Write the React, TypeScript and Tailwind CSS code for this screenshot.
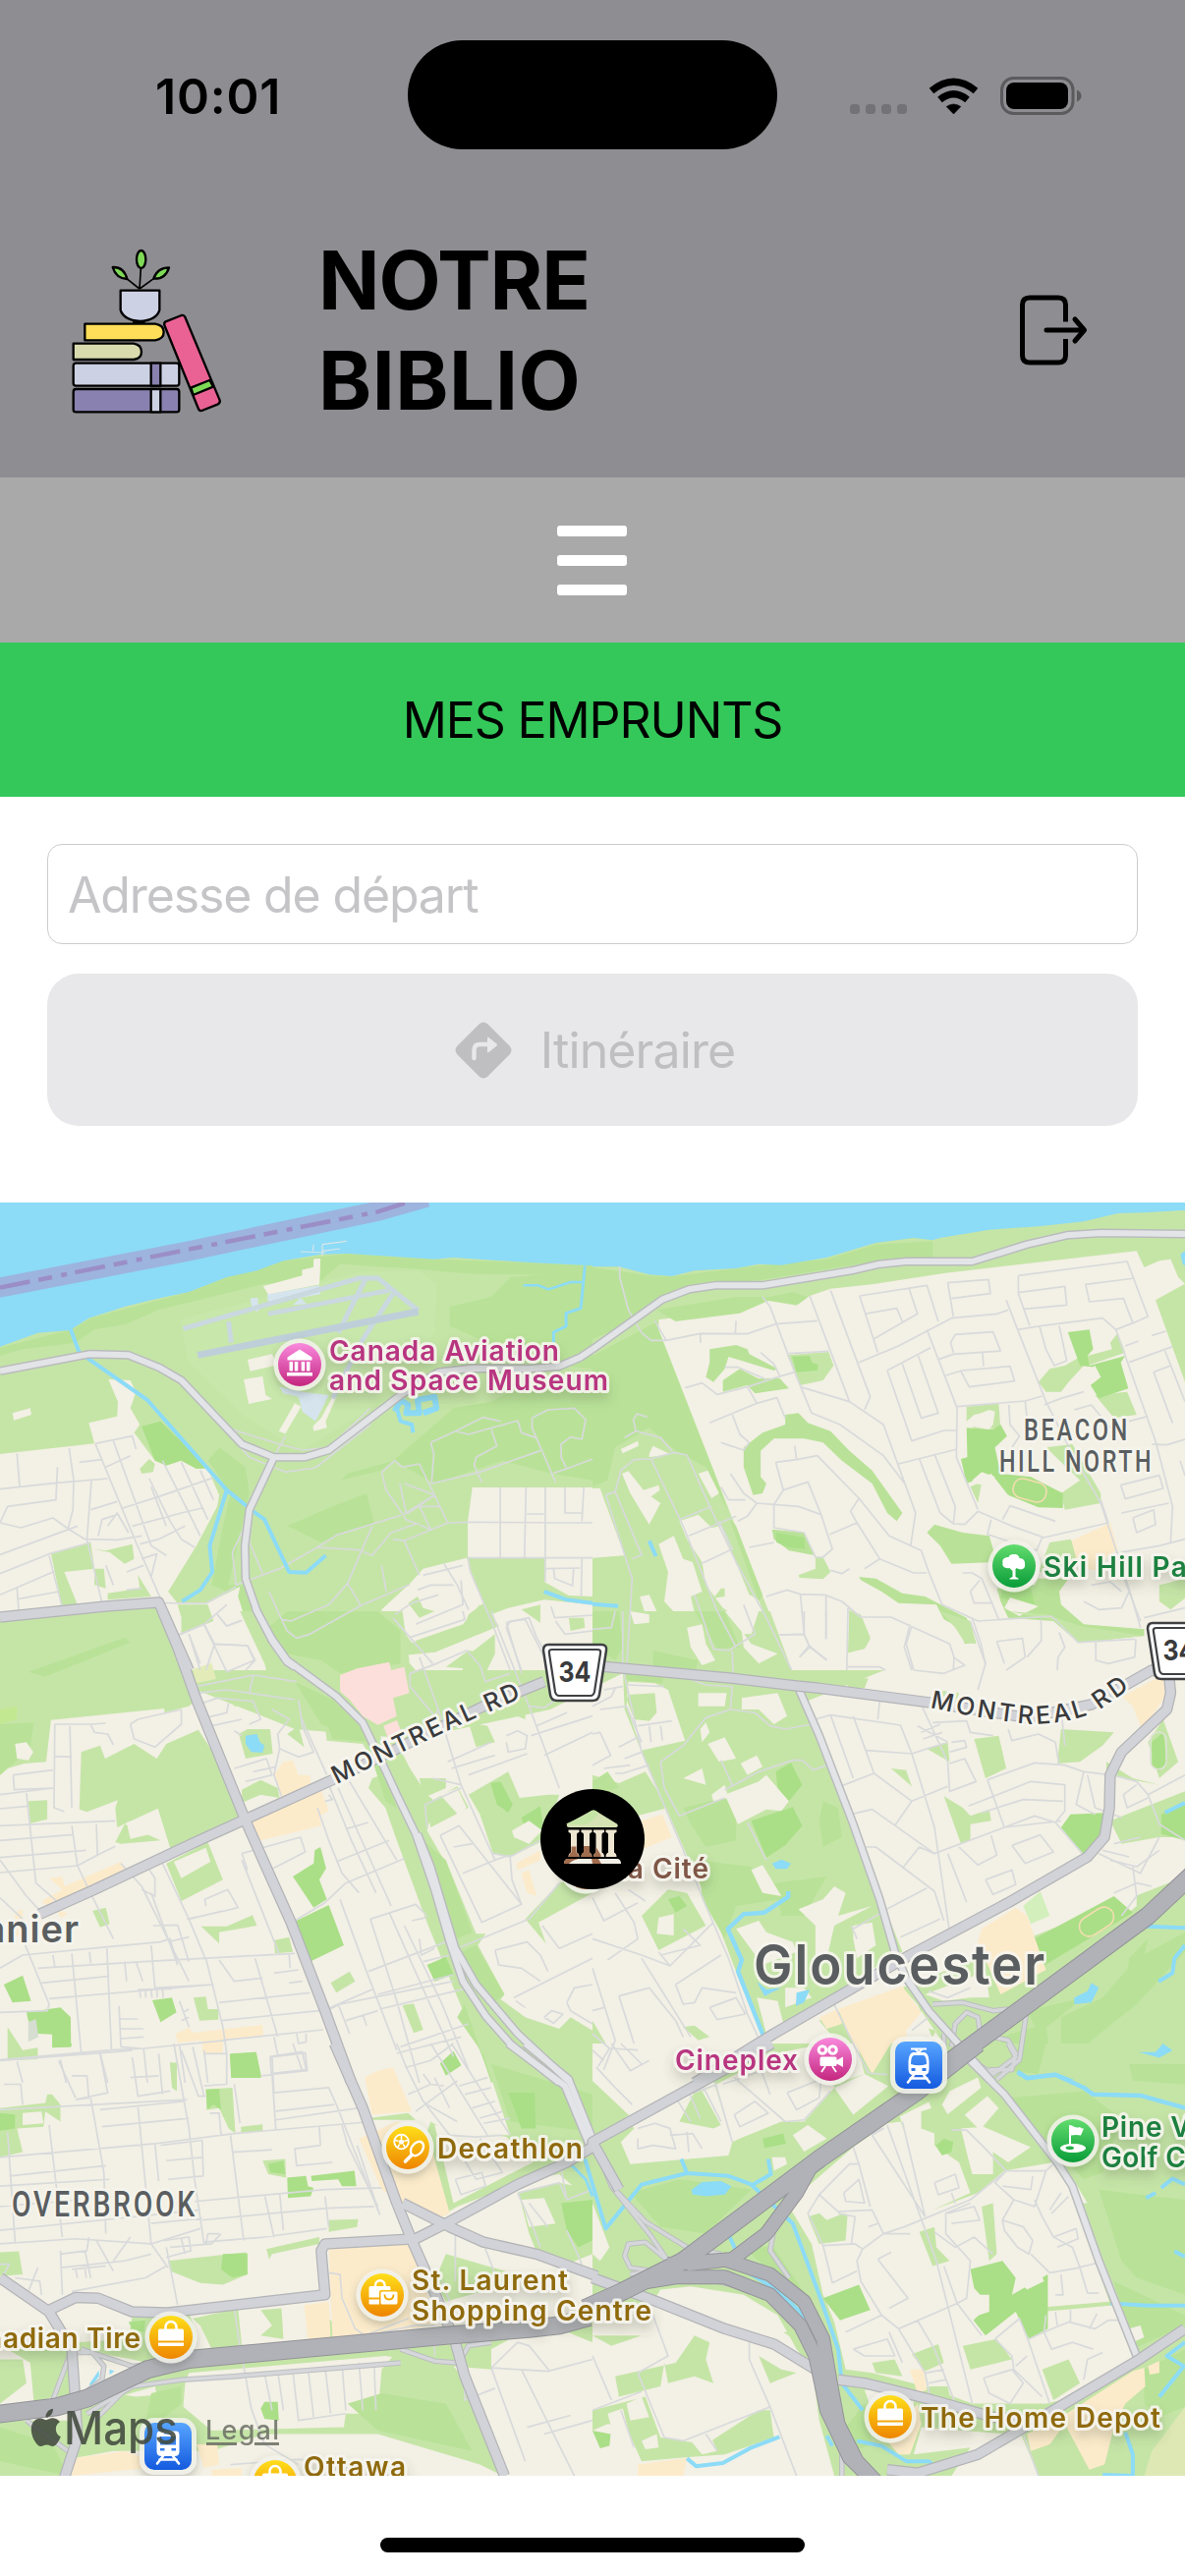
import React from 'react';

type TileId = 'A' | 'B' | 'C' | 'D' | 'E' | 'F' | 'M';

/* Map sheets: each one carries its own drawing grid and is placed on the map. */
const KX = 603 / 1568;
const SHEETS: Record<TileId, string> = {
  A: `translate(0 1220) scale(${KX} ${1 / 3})`,
  B: `translate(603 1220) scale(${KX} ${1 / 3})`,
  C: `translate(0 1640) scale(${KX} ${1 / 3})`,
  D: `translate(603 1640) scale(${KX} ${1 / 3})`,
  E: `translate(0 2080) scale(${KX} ${542 / 1568})`,
  F: `translate(603 2080) scale(${KX} ${542 / 1568})`,
  M: '',
};

const toPath = (s: string, close = false) =>
  s
    .split(';')
    .map((p) => p.trim())
    .filter(Boolean)
    .map((p) => 'M' + p.split(/\s+/).join('L') + (close ? 'Z' : ''))
    .join('');

const C = {
  land: '#F3F0E5',
  green: '#C5E5A7',
  deep: '#B9E298',
  park: '#AADF87',
  water: '#8CDBF7',
  street: '#D8DADB',
  shop: '#FCEBCB',
  pink: '#FCDFDA',
  apron: '#D6E4EE',
};

type Area = [TileId, string, string];

const AREAS: Area[] = [
  ['M', C.green, '0,1224 1206,1224 1206,1700 900,1700 800,1740 640,1700 560,1740 420,1770 300,1760 0,1640'],
  ['A', C.deep, '0,455 190,400 240,365 500,285 600,240 750,190 920,168 1150,185 1400,195 1568,205 1568,235 1250,230 1100,215 900,200 850,250 700,260 560,300 420,340 330,385 250,400 200,440 60,460 0,480'],
  ['A', C.deep, '1190,330 1300,300 1350,240 1568,220 1568,520 1400,500 1250,420 1190,390;580,760 650,820 660,900 600,1200 560,1180 590,1000 610,900 550,800;900,860 1010,830 1200,640 1300,620 1400,560 1568,540 1568,860 1460,840 1330,800 1150,870 1040,800 920,840;760,1000 880,940 970,900 990,990 850,1050;700,1380 900,1330 1010,1260 1060,1400 1020,1440 760,1440;30,1400 340,1335 345,1355 100,1440 0,1440 0,1420;580,1180 650,1180 690,1300 760,1440 710,1440 640,1260'],
  ['A', '#C8E7AB', '475,370 960,222 1110,222 1155,260 1150,410 980,640 800,770 640,660 500,500'],
  ['B', C.deep, '0,210 150,235 210,238 440,205 620,185 750,140 900,130 900,180 760,190 440,250 250,270 180,305 80,390 0,430;0,480 180,370 260,620 330,860 360,960 300,820 220,770 150,700 60,760 40,860 0,880;170,340 380,300 470,300 530,285 570,300 550,325 470,312 390,350 220,375'],
  ['A', C.land, '0,780 250,748 235,685 310,665 312,620 287,552 345,555 360,590 345,640 370,690 355,715 410,800 480,800 520,825 550,825 580,905 575,940 520,1060 445,1200 470,1236 430,1232 0,1275;33,655 80,640 83,660 37,677;697,268 800,235 800,218 830,210 830,185 848,183 845,262 710,292;655,492 720,475 735,508 662,527;645,552 695,543 703,600 720,612 658,627;738,710 780,625 797,635 755,718;828,695 850,670 885,595 890,605 862,680 865,700 830,710;1250,882 1568,882 1568,1215 1505,1212 1440,1170 1445,1097 1238,1097 1238,985;1010,1255 1085,1175 1120,1130 1235,1097 1250,1150 1280,1235 1240,1270 1230,1300 1090,1357 1040,1275 1012,1280;1065,1395 1150,1385 1320,1305 1300,1270 1345,1250 1440,1225 1568,1240 1568,1440 1100,1440;430,1235 550,1235 635,1185 630,1215 645,1270 705,1400 710,1440 480,1440;448,1410 470,1400 490,1440 460,1440'],
  ['A', C.green, '370,825 395,795 410,810 405,835 375,840;135,1085 240,1050 250,1130 170,1140 205,1240 165,1250;245,1070 280,1075 350,1055 355,1100 330,1115 290,1080;250,1130 275,1130 280,1190 250,1180;285,1205 370,1190 365,1150 400,1215 285,1225;470,1240 550,1240 565,1290 480,1330 480,1280;1080,1235 1105,1215 1120,1250 1150,1260 1110,1280;1100,1350 1250,1290 1300,1270 1320,1305 1150,1385 1080,1385;1225,1300 1270,1240 1290,1260 1250,1310;1180,1430 1240,1380 1290,1390 1290,1440;1380,1255 1430,1240 1430,1295;1505,1280 1545,1280 1548,1310 1510,1320'],
  ['A', C.park, '375,695 425,680 550,822 520,825 480,800 440,815 410,800'],
  ['A', C.apron, '707,292 845,265 848,292 710,320;662,305 682,302 684,345 668,340;740,575 800,590 870,600 835,680 800,650 790,605 750,595;775,325 795,303 812,322'],
  ['B', C.land, '175,370 205,365 220,375 390,350 465,312 540,326 575,297 630,275 740,262 930,228 1440,160 1460,210 1500,190 1530,185 1550,240 1568,260 1490,310 1568,560 1568,1440 527,1440 175,400;0,885 20,885 85,1090 0,1097;75,765 120,740 122,755 80,778;150,780 160,755 205,780 150,790;78,840 95,832 135,890 175,875 178,890 155,910 180,930 150,995 100,900;280,840 305,830 335,900 315,915;230,985 280,965 315,1005 340,1000 415,1210 440,1225 490,1400 430,1425 400,1380 425,1310 345,1250 300,1180 290,1110 250,1040;175,1055 215,1030 240,1100 265,1110 290,1200 260,1215 270,1265 230,1280 190,1230 200,1140;125,1215 150,1210 170,1260 150,1300 105,1295 140,1270;250,1320 300,1310 300,1350 325,1400 290,1425 260,1380;0,1260 90,1265 85,1290 50,1300 60,1350 0,1340'],
  ['B', C.green, '340,1190 350,1190 350,1215 320,1220;515,478 625,468 638,510 610,555 550,570;680,1255 710,1280 735,1345 720,1375 676,1387;545,1150 590,1130 590,1095 610,1095 630,1140 610,1162 548,1158;990,635 1075,625 1080,705 1005,700 1060,650 1010,660 990,680;1180,560 1210,520 1250,510 1295,480 1300,510 1260,560 1240,590 1200,590;1310,510 1410,470 1390,410 1370,440 1375,460 1310,480;1210,1050 1265,1040 1290,1090 1230,1140 1180,1140;1500,1180 1568,1160 1568,1220 1530,1255 1500,1230;1200,760 1270,750 1345,900 1345,930 1250,950 1240,900 1290,860;1000,880 1030,865 1020,930;1330,600 1415,590 1440,660 1380,670'],
  ['B', C.deep, '310,460 380,447 410,460 415,475 490,520 480,525 360,483 350,520 320,560 300,545 310,500;345,555 390,520 440,550 495,548 520,580 430,595 410,570 345,590;510,660 545,655 570,685 630,710 680,770 740,830 820,960 805,985 780,960 740,870 660,800 610,745 560,733 480,733 445,770 445,850 460,870 450,900 425,905 400,820 400,760 450,715 510,690;885,1020 905,995 980,1020 1050,1030 1070,1110 950,1115 920,1060;475,1010 560,1020 590,1090 520,1075 480,1040;705,1155 750,1160 820,1205 880,1215 990,1280 1015,1355 985,1360 970,1310 930,1285 910,1240 810,1235 765,1200 710,1165;1070,1190 1170,1180 1180,1160 1260,1160 1235,1200 1240,1240 1300,1300 1460,1315 1460,1335 1285,1355 1220,1290 1100,1280 1080,1230;360,970 380,1000 450,1210 440,1230'],
  ['B', C.park, '528,482 575,480 580,500 598,508 595,525 540,530;990,700 1060,705 1080,690 1097,725 1065,760 1080,840 1160,850 1245,900 1245,945 1180,943 1100,905 1055,840 990,870 975,795 992,790;1258,408 1315,400 1325,460 1310,480 1315,510 1410,480 1398,500 1418,580 1340,610 1318,570 1345,545 1330,515 1290,510;485,1020 560,1035 562,1070 520,1065 487,1050;1085,1180 1160,1190 1170,1240 1080,1220'],
  ['B', C.land, '1005,665 1050,645 1065,650 1060,690 1050,705 1005,695;1005,860 1030,835 1065,850 1060,880 1010,870;1305,530 1330,510 1345,545 1320,560;1090,1250 1105,1218 1180,1245 1130,1275;1250,1200 1290,1160 1450,1160 1450,1310 1310,1300 1240,1235'],
  ['B', C.shop, '1268,1045 1370,990 1390,1070 1360,1095 1350,1140 1310,1130 1280,1100'],
  ['C', C.green, '0,20 430,0 520,270 500,290 435,310 435,297 135,332 122,460 65,465 20,480 0,500;215,430 265,410 278,450 355,405 415,450 440,405 525,362 580,460 640,640 455,740 418,602 310,660 305,600 312,577 230,613 210,605;330,650 425,700 320,710 305,705;635,0 1065,0 1083,150 1083,260 1000,340 1010,400 1050,400 1085,480 1130,560 1150,580 1130,670 1190,790 1260,985 1285,985 1265,1020 1335,1170 1325,1185 1390,1240 1480,1275 1510,1240 1568,1280 1568,1440 1305,1440 1200,1150 1130,950 1050,700 1020,600 975,540 985,510 1010,500 960,405 905,400 865,395 860,350 830,340 800,262 785,215 710,200 700,160'],
  ['C', C.deep, '700,60 760,0 1000,0 1060,60 1060,160 900,190 850,150 760,130;780,215 880,270 960,350 1000,450 1050,600 1020,580 970,400 850,345;75,185 330,80 345,95 120,200;860,330 960,350 980,400 880,390;1100,680 1180,760 1250,980 1210,1000 1120,760;1260,1020 1335,1170 1300,1200 1220,1040;1210,1240 1320,1420 1300,1440 1230,1200;0,345 90,340 80,420 0,500'],
  ['C', '#C3E892', '0,300 45,290 45,330 0,345'],
  ['C', C.land, '335,645 395,625 400,680 345,695;40,405 70,400 88,430 75,455 45,450'],
  ['C', C.pink, '900,195 945,175 1030,155 1035,180 1070,170 1083,250 1040,265 1050,320 1000,347 960,320 925,270 900,245;1015,350 1050,333 1065,375 1030,400'],
  ['C', C.green, '440,770 550,705 590,820 480,885;75,580 125,577 125,635 80,648;532,962 600,962 668,928 680,960 580,980 580,1015;245,915 280,905 290,955 265,965;1065,1203 1095,1198 1120,1278 1095,1288;512,1180 545,1177 550,1215 578,1215 578,1247 528,1250;632,375 655,360 715,360 722,435 650,450;760,375 790,350 805,415;610,270 700,255 780,290 790,320 700,290 620,290;640,545 690,515 735,540 740,570 690,560 640,585;725,1005 765,995 775,1040 728,1045;875,1135 925,1100 940,1130 890,1165;1240,340 1290,350 1310,400 1260,415;1240,560 1345,490 1375,570 1450,560 1480,560 1440,700 1350,750 1305,740 1270,620;1110,510 1180,510 1180,540 1120,570;1125,590 1210,535 1240,600 1140,660;1220,150 1310,70 1310,130 1280,200 1225,180;1085,180 1150,180 1140,240 1090,230;1345,310 1390,290 1390,330;1425,950 1568,860 1568,800 1480,830 1390,940 1445,1015;20,1270 60,1340 100,1333 100,1368 20,1372;450,1380 468,1378 468,1440 455,1440'],
  ['C', C.land, '460,765 545,722 557,765 480,815;1165,560 1210,540 1235,600 1215,625'],
  ['C', C.park, '775,810 830,770 833,730 848,720 863,785 845,820 865,880 830,905;775,950 870,897 910,1020 820,1070;10,1140 60,1112 82,1190 33,1195;70,1225 160,1210 187,1240 188,1330 138,1332 138,1292 100,1290 75,1250;403,1188 455,1180 467,1225 425,1255;608,1353 678,1347 690,1425 612,1425;1130,1080 1180,1055 1200,1110 1150,1130;1165,1380 1200,1343 1220,1385 1180,1410;1298,525 1325,520 1357,590 1345,615 1315,590;1380,630 1430,595 1440,680 1390,670'],
  ['C', C.land, '1355,670 1400,640 1435,670 1400,710 1360,690'],
  ['C', C.shop, '725,500 750,460 775,455 790,500 820,500 825,540 745,565;665,645 850,545 870,610 845,625 850,655 690,700;110,885 165,850 130,815 165,810 170,840 320,765 330,790 130,905;465,1290 500,1272 510,1287 695,1263 697,1295 590,1310 588,1350 535,1348 535,1310 470,1318;1365,770 1430,730 1430,760 1370,790;1380,800 1400,790 1420,870 1395,860;40,920 60,910 60,1000 40,990;150,910 180,925 160,935'],
  ['C', '#E3ECB8', '510,178 560,158 572,207 520,220'],
  ['C', '#D5DED0', '75,1255 95,1245 102,1300 75,1315'],
  ['C', C.water, '650,380 680,375 688,400 700,410 695,432 665,430 650,405'],
  ['D', C.green, '70,0 470,0 545,235 700,690 820,1040 700,1120 600,1200 455,1300 380,1100 330,950 240,720 130,430 85,300 80,170 70,100;0,500 70,525 140,490 200,600 0,660'],
  ['D', C.deep, '270,0 350,0 390,110 330,115;160,120 280,150 270,190 160,170;610,580 650,600 660,690 610,720 600,640;240,600 380,560 380,700 300,720 260,650;280,760 420,780 500,880 380,900 350,1000 290,880;480,830 620,810 560,930 500,930;0,0 70,0 80,110 60,150 0,100;85,190 190,190 185,220 85,210'],
  ['D', C.land, '250,50 290,40 300,100 325,150 290,165 260,110;100,0 150,10 150,35 110,40;350,0 440,0 420,70 400,70;395,60 420,100 490,130 440,160 400,110;280,250 355,250 350,290 280,290;395,265 490,250 515,320 480,345 440,300 395,300;305,405 350,385 380,450 335,460;285,360 300,340 310,370 290,400;392,465 435,440 450,475 410,500;240,510 290,480 300,530 270,520;350,560 440,520 460,500 490,540 520,580 500,610 460,605 385,650;315,560 350,530 360,570 320,580;420,790 450,775 500,870 450,860;545,910 610,880 640,840 670,860 650,930 740,900 640,960 620,1060 590,1060 590,960;380,970 440,945 460,980 530,1010 540,1040 450,1080;690,960 740,950 750,1020 700,1060 690,1000;435,1180 490,1190 510,1280 460,1290;510,1150 560,1150 580,1180 510,1210;95,215 165,220 200,240 245,395 130,425 90,290'],
  ['D', C.green, '95,255 165,250 170,310 150,335 110,330 90,270;130,930 200,850 250,860 300,960 175,1035;680,0 710,10 735,80 720,110 678,127;920,0 1000,30 1015,100 985,95 960,50;675,205 730,205 720,235 675,235;1100,0 1200,10 1290,45 1460,75 1285,97 1230,30;1010,390 1075,380 1095,480 1040,510;930,565 980,600 1000,625 1050,605 1055,640 1000,650 1000,700 975,710;885,420 940,400 945,460;1240,360 1380,370 1350,410 1290,460 1230,465;1360,460 1430,510 1500,530 1360,500;790,480 830,485 845,535;910,240 970,250 960,290 920,270;1470,400 1510,330 1550,460 1500,510;1370,640 1568,550 1568,690 1500,690 1400,710;0,1250 40,1330 0,1350;240,1270 270,1265 310,1300 280,1310;600,1250 700,1200 740,1420 710,1400;820,1150 1568,810 1568,1440 1000,1440 930,1380 860,1200'],
  ['D', C.land, '175,935 215,925 215,990 170,985;1000,1440 870,1220 850,1270 930,1400;880,1170 1040,1100 1050,1180 1000,1180 930,1190;1140,920 1200,830 1330,760 1440,780 1440,900 1400,940 1350,910 1300,940 1280,930 1330,830 1170,985;870,1270 910,1280 900,1300;1310,330 1340,330 1335,360 1305,350'],
  ['D', C.deep, '1240,1240 1350,1180 1440,1060 1568,980 1568,1040 1440,1200 1300,1330 1240,1400;1080,1300 1200,1260 1220,1440 1100,1440;1410,1390 1568,1380 1568,1430 1400,1420;1470,1000 1440,1180 1410,1180 1420,1060;0,520 40,490 70,540 0,560;1150,1220 1300,1180 1180,1290'],
  ['D', C.park, '485,490 525,462 555,530 520,580 490,540;420,640 530,598 555,655 510,715 460,752;1240,660 1265,620 1370,615 1350,700 1300,745;1505,620 1568,590 1568,700 1505,680;1170,1000 1380,870 1430,920 1190,1085;1480,400 1510,370 1520,460 1500,490 1480,470;200,880 230,870 250,900 220,920'],
  ['D', '#D3F0BC', '1140,900 1185,855 1210,930 1160,955'],
  ['D', C.shop, '1030,970 1120,905 1150,930 1200,1095 1080,1170 1020,1010;600,1240 650,1215 660,1260 620,1275;650,1215 820,1145 870,1225 830,1280 830,1310 780,1400 730,1415 690,1320;1400,260 1510,195 1515,260 1455,365 1430,290;130,640 185,620 210,690 135,725'],
  ['D', C.water, '475,770 500,758 525,770 515,787 485,787;540,1165 575,1155 560,1195 538,1205;435,1130 460,1155 500,1150 455,1175;1275,1180 1310,1160 1320,1135 1340,1150 1320,1195 1275,1200;1445,1340 1490,1340 1510,1320 1535,1335 1510,1365 1460,1360'],
  ['E', C.green, '1270,0 1568,0 1568,470 1480,385 1400,400 1210,480 1180,500 1130,260 1140,230 1190,265 1350,270;0,190 120,175 125,150 138,150 160,180 160,230 120,200 115,245 45,250 60,320 0,335;545,135 615,130 623,265 605,250 580,190 548,195;638,245 695,238 695,258 638,265;695,345 755,340 757,395 710,385;445,640 650,615 655,680 590,710 530,705 450,670;705,605 845,570 845,590 720,620 712,635;0,615 50,612 60,680 0,685;450,55 468,60 468,140 455,130;870,520 948,517 945,540 870,555;975,220 1080,205 1100,225 985,225;350,800 500,795 520,850 510,920 390,940 350,930 200,900 200,880 340,870;510,810 630,780 640,890 560,900 530,830;690,785 745,780 750,870 690,860 720,830;815,870 870,810 890,830 880,870;20,900 190,900 190,1040 140,1040 90,1060 80,940 20,900;0,930 60,930 70,1000 0,1060;520,920 1060,890 1180,880 1350,870 1300,900 1300,960 1200,950 1020,920 500,970 490,1000 485,1070 560,1140 910,1130 915,1090 1000,1090 1010,960 1040,920 1200,950 1230,990 1330,1273 1270,1240 1000,1150 700,1150 560,1200 300,1200 200,1220 170,1273 0,1273 0,1110 200,1110 230,1045 390,975;1180,620 1400,690 1180,760 1150,700;1370,440 1480,410 1568,430 1568,620 1500,650 1370,590;1480,840 1568,800 1568,880'],
  ['E', C.land, '1150,240 1340,275 1410,350 1200,470 1170,330;330,1035 410,1010 415,1035 360,1040;1185,510 1370,430 1400,560 1430,640 1300,590 1200,540;1380,460 1440,455 1470,530 1400,540;1300,600 1500,660 1410,690 1330,650;60,205 110,200 115,235 60,240'],
  ['E', C.deep, '1300,60 1568,150 1568,260 1420,240 1350,230;0,1130 140,1180 180,1273 0,1230;920,1060 1010,1030 1180,1060 1250,1200 1000,1140;400,1030 480,1010 480,1060 380,1150'],
  ['E', C.park, '0,205 40,210 40,250 0,257;760,395 810,390 815,420 830,425 822,450 762,455;823,390 938,375 943,420 905,420 895,400 825,405;610,30 678,25 692,100 612,100;545,135 580,133 585,195 565,180 548,195;590,620 655,618 655,680 615,690 585,665;1165,60 1200,25 1220,65 1180,95;1345,145 1415,145 1418,250 1380,250;340,820 385,815 380,850 350,840;690,1075 700,1055 735,1055 738,1110 700,1105;710,355 750,345 755,385 715,380;140,0 190,0 188,10 140,12;1485,470 1568,460 1568,580 1530,600 1500,550'],
  ['E', C.shop, '870,600 1085,592 1110,640 1150,830 880,870;965,100 1000,80 1040,70 1090,200 985,210;950,280 1050,230 1130,260 1190,500 1150,520 1070,470 1010,430;805,770 870,760 875,870 815,875;200,1220 330,1200 380,1220 400,1250 300,1260 190,1273;520,1180 575,1180 580,1240 540,1250;560,1255 640,1250 640,1273 560,1273;535,0 590,0 588,30 540,28'],
  ['E', C.water, '235,1005 262,962 262,980 245,1005;290,960 303,965 290,975'],
  ['F', C.green, '0,0 1568,0 1568,1273 0,1273'],
  ['F', C.deep, '1340,430 1568,460 1568,740 1440,690 1400,640;1420,60 1568,60 1568,120 1430,110;100,440 230,400 420,430 300,560 180,540;1100,160 1300,140 1400,220 1350,380 1300,400 1180,260;1130,0 1200,0 1180,90 1100,80;390,590 480,600 600,800 620,880 500,700;1380,700 1568,800 1568,830 1430,900;670,1130 720,1060 740,1180 690,1200;1460,960 1568,900 1568,1070 1500,1100 1460,1060;0,1180 240,1230 200,1273 0,1273'],
  ['F', C.land, '0,0 475,0 100,215 0,110;210,190 480,30 620,0 640,130 560,230 500,230 400,275 370,290 325,120;90,215 320,110 370,290 360,330 100,355 75,290 110,250;640,130 720,90 783,125 690,210;620,0 700,0 720,90 640,120;528,495 560,430 690,305 780,235 815,230 880,405 900,490 1020,440 1090,375 1220,350 1260,420 1330,640 1368,760 1205,775 1190,790 1385,770 1440,920 1320,1000 1240,1050 1200,1060 1005,1060 880,1010 740,970 670,960 640,820 610,740 580,590;813,215 890,172 897,190 870,200 870,250 905,265 905,300 970,350 1000,440 900,490 870,400;925,180 945,140 1020,100 1028,130 940,208;985,210 1045,155 1075,190 1025,255;975,250 1035,245 1160,305 1100,350 1060,320 1060,385 1005,385 990,320;530,270 570,240 620,280 560,318;475,335 510,335 515,355 480,375;0,470 45,600 20,640 0,620;1275,405 1310,470 1290,470;1420,840 1450,830 1460,865 1430,880;180,725 260,715 400,740 490,800 540,900 582,960 600,1110 640,1273 0,1273 0,800 160,760;720,1020 800,1020 850,1050 850,1140 760,1150;870,1130 1100,1150 1130,1140 1180,1273 950,1273 1000,1190 850,1210'],
  ['F', C.green, '570,510 600,500 620,520 665,500 675,505 670,580 600,590;0,860 130,860 50,890;60,980 220,940 270,860 310,880 300,930 320,1000 270,980 200,1000 190,940 180,1010 70,1040;505,850 540,850 545,880;865,555 905,540 910,600 945,640 900,655;845,915 915,885 930,940 880,965;980,890 1070,870 1110,930 1000,960;1030,480 1060,470 1070,620 1050,640;0,1080 140,1040 180,1160 300,1180 440,1080 470,1080 480,1160 350,1210 230,1220 130,1230 90,1130 40,1120 0,1140;230,230 280,120 340,240 320,250;440,920 500,960 540,970 470,1000;740,940 800,930 820,980 750,970;890,1010 940,1010 950,1060 900,1060;1190,960 1260,930 1290,1000 1220,1050'],
  ['F', C.land, '40,1090 80,1075 95,1140 55,1150;90,1060 130,1040 150,1100 100,1110;130,1170 170,1150 175,1190 140,1195;260,1170 310,1150 330,1200 290,1210'],
  ['F', C.park, '610,750 705,710 735,785 655,815;1000,665 1085,640 1120,690 1110,740 1205,680 1205,840 1155,870 1120,790 1040,860 1008,815 1050,770 1010,720;450,280 505,265 512,295 455,308;908,300 930,280 955,290 950,320 925,330;0,1140 48,1150 45,1185 20,1192'],
  ['F', C.land, '1145,670 1180,660 1195,700 1150,725 1120,690;1000,740 1050,740 1050,790 1010,805'],
  ['F', C.shop, '1150,1150 1240,1100 1430,965 1460,955 1463,1010 1410,1060 1380,1130 1355,1240 1315,1255 1250,1120 1210,1180 1160,1200;840,960 875,960 885,1020 860,1030;780,1170 860,1060 870,1120 840,1210 810,1210;1470,950 1500,935 1500,970 1475,975;695,0 790,0 740,90;120,1240 250,1220 240,1273 120,1273'],
  ['F', '#DDE8B4', '1460,1273 1480,1200 1568,1070 1568,1273'],
  ['F', C.water, '262,430 290,408 340,405 368,420 350,445 300,450 265,445;1445,25 1490,25 1510,0 1535,20 1500,42'],
];

const SEA =
  '0,12 1568,12 1568,205 1400,195 1200,180 1150,185 920,168 850,170 750,190 680,220 600,240 500,285 400,310 330,330 235,365 185,402 100,410 0,452';
const SEA_EAST =
  '0,12 1568,12 1568,35 1470,42 1390,45 1300,70 1180,85 1050,95 920,120 900,127 850,120 750,135 620,180 500,203 440,200 380,213 270,220 210,237 150,232 70,208 0,208';

const STREETS: [TileId, string][] = [
  ['A', '0,887 150,868 285,855;45,778 52,880;183,762 195,860 193,950 180,1008;242,862 230,1040 270,1235;252,748 360,1050 430,1235;0,990 55,1005 140,975 180,1008 225,1040 310,1042 375,1030;20,940 148,920 152,820;20,940 0,990;0,1087 205,1000;0,1145 130,1085 240,1050;0,1210 145,1138;45,1190 50,1265;50,1222 155,1200;240,950 310,925;210,805 268,797;300,740 400,1060 440,1090;252,748 350,725 360,765;280,820 345,785;325,945 420,910 570,850;350,1000 480,960 535,945;395,855 450,985 480,1040 515,1065;430,800 500,960 530,1030;480,805 550,980;530,830 565,920;370,1055 420,1040 490,1000;400,880 440,1000;285,1000 310,960 340,1020;260,1030 270,980 310,965;375,1100 415,1085 400,1155;280,1120 300,1180;335,1140 380,1120;335,1195 375,1190;165,1250 130,1090'],
  ['A', '600,700 740,750 800,768 870,760 980,640;600,710 660,790 755,835 835,822 980,690;755,725 725,790;660,970 615,1080 625,1180;625,1180 740,1130 840,1065 890,1028 1080,960 1145,910;665,985 660,1050 695,1145;430,1235 545,1236 625,1185;840,1065 950,1073 985,1090 1035,1020 1110,990;985,1000 920,1175 870,1240 770,1290 745,1285 712,1200;745,1285 760,1320 785,1342 820,1330 955,1243 1085,1178;920,1175 955,1243;1010,1120 1022,1200;1070,1045 1110,1150;1040,1040 1070,1045 1185,990 1238,988;1140,745 1205,710 1278,668 1325,680;1140,745 1148,780 1142,870 1270,835 1430,770;1205,710 1240,720 1370,678 1380,715 1418,730;1300,705 1315,755 1260,790 1255,815 1275,865;1010,835 1045,800 1065,820 1110,810 1185,990;1010,835 1022,890 1075,980 1140,1010 1110,940 1165,940;1058,870 1075,960 1150,905 1070,870;1408,670 1450,645 1520,640 1550,675 1540,735 1510,728 1485,750 1485,790 1500,825 1568,795;1408,670 1408,700 1470,865;1465,838 1500,825'],
  ['A', '1238,988 1568,990;1324,882 1324,1097;1392,882 1388,1097;1443,882 1443,1170;1495,882 1495,960 1540,960;1545,882 1540,985;1395,963 1440,963;1238,1097 1568,1097;1445,1130 1535,1128;1465,1130 1468,1160 1515,1182 1518,1130;1540,1100 1538,1215;1238,1097 1245,1140 1300,1290 1350,1440;1175,1115 1210,1180 1240,1255;1120,1150 1225,1120;1105,1195 1140,1180 1200,1180;1100,1300 1225,1240 1220,1165;1045,1270 1090,1235 1160,1210;1340,1310 1350,1290 1390,1285 1440,1400;1340,1310 1380,1440;1458,1245 1468,1280 1568,1272;1470,1290 1495,1330 1568,1320;470,1335 540,1300 600,1240;500,1330 530,1440;540,1300 568,1360 655,1365 675,1410 650,1440;568,1360 545,1440;575,1270 600,1305 640,1288'],
  ['B', '72,208 72,240 95,340 130,410 155,433 195,433 285,412 410,413 485,383 595,373;165,373 195,433;380,373 378,410;285,412 286,440;450,300 470,330 535,530 580,655 655,690 770,785 828,873;575,297 680,620;630,280 735,605 720,645;245,578 290,563 330,598 410,575 490,545 535,530;410,575 435,625 310,685;435,625 488,608 510,670;370,660 390,720 415,745 400,768 340,745;445,470 480,505 495,540;350,515 385,515 460,552;520,473 625,466;550,575 680,620 770,690 855,960 842,1060;810,810 965,765;707,297 885,265 915,375;707,297 755,470;720,352 805,335 820,375;745,428 860,352 838,275;705,500 810,450 950,365 1070,352 1100,340;885,400 965,640 963,790 1020,950;780,525 895,455;780,525 845,740 930,708 963,708;820,505 870,670 915,655 862,480;918,490 955,475 1080,465 1060,407 960,415 948,440 955,470;1032,468 1035,512;935,540 978,525 1105,512 1117,557 997,575 975,527;940,257 1048,247 1053,290 950,305;940,257 955,360'],
  ['B', '1127,235 1415,192 1470,360 1430,380 1405,305 1315,315 1305,262 1435,243;1127,235 1127,290 1157,388;1127,287 1250,268 1255,325 1143,337;1095,310 1125,400 1200,620 1270,780 1345,930 1425,1210 1450,1310;1125,400 1190,388 1350,365 1385,400;1183,390 1200,460 1222,510 1255,495 1235,388;1385,400 1490,740 1535,940 1530,1050;1385,400 1430,380;965,635 1145,618 1190,603;1102,630 1105,690 1130,725 1110,760;1145,620 1150,670;865,795 920,960 955,993 985,995 1020,955;905,780 960,940 955,993;1420,500 1535,452;1410,450 1445,435;1480,418 1518,405;1515,465 1568,620;1485,530 1530,510;1485,530 1535,685;1420,680 1470,665;1480,750 1520,752 1568,735;1398,875 1500,845 1510,885 1410,917 1398,875;1430,975 1485,950 1490,995 1440,1020 1430,975;1400,960 1525,930;1555,800 1568,845;1020,955 1110,1000 1195,1035 1365,990 1345,920;1085,980 1105,938 1225,985;1055,980 1045,1025 1175,1075 1190,1035;1195,630 1240,610 1300,590;1275,645 1320,630 1370,700'],
  ['B', '405,920 360,920 340,880;365,840 400,900 435,930 545,940 605,965;435,930 410,970 385,985;480,935 480,1005 560,1020 590,1095 610,1095 635,1070 605,965 570,865 505,890 480,935;505,890 485,805;485,805 540,797 595,785 705,915 785,1030 870,1075 890,1140 925,1240 1020,1290 1215,1275 1285,1355 1435,1345;540,797 535,755;628,1025 700,990 760,1100 850,1143 885,1143;720,1130 760,1100;630,1135 660,1145 680,1130;705,915 683,955 700,990;415,1065 480,1050;460,1215 515,1195 550,1208 615,1210 660,1230 710,1278 790,1278 945,1360 957,1400 955,1440;550,1208 560,1330;618,1210 618,1345;676,1250 673,1440;495,1332 560,1330 573,1365 548,1400;573,1365 620,1410;840,1300 825,1370 845,1440;1000,1290 1040,1420;1070,1352 1138,1343 1145,1400 1095,1440;1070,1352 1090,1420;1187,1285 1188,1350 1150,1400;1235,1325 1250,1370 1232,1400 1230,1440;1332,1355 1332,1410 1365,1420 1435,1400 1438,1345;980,1143 1005,1143 1030,1160 1075,1285;1000,1200 1025,1165;1000,1200 1010,1235 1060,1235'],
  ['B', '60,895 75,830 110,797 155,795 215,775 250,783 310,940 380,1110 460,1280 527,1440;155,795 240,1000 330,1260 380,1370;35,905 60,895 130,1088 105,1100;35,905 105,1160 90,1440;230,980 315,940;255,1030 380,970;287,1115 370,1070 335,985;270,1210 320,1375 360,1380 430,1330 400,1240;115,710 180,730 210,770;85,730 115,710 108,675 118,657 145,667;1320,1180 1370,1170 1400,1200;1300,1230 1340,1255 1400,1250 1420,1200;1390,1110 1420,1200 1450,1290;1460,1280 1568,1250;1400,1080 1500,1060 1568,1040'],
  ['C', '145,345 240,345 280,342;145,345 143,600 170,612;185,350 190,600;145,443 190,445;35,500 140,485;38,545 140,540;35,500 38,548;0,560 140,540;0,603 75,595;70,555 95,830 160,895;0,655 305,640;0,700 195,682;0,752 228,730;0,798 205,777 265,740 305,718;190,655 205,777 235,850 300,1000;255,650 258,745;240,345 250,370 285,375 300,408;345,345 365,330 480,300;345,345 355,390 410,415 480,345 480,300;0,875 60,940;0,760 70,870 110,920;320,770 375,840 500,1130;375,850 410,870 410,815 395,790;400,860 470,1080;430,770 500,940 545,1065;495,940 595,915 630,905 603,850 542,880 545,900;500,940 590,915;0,1090 60,1050 285,1025 425,1010;60,1000 130,1200 125,1220 0,1225;100,1090 380,1070 780,1045;110,1135 285,1115;130,1183 565,1140;190,1045 215,1350;283,1030 295,1340;237,1040 240,1075;140,1050 145,1085;330,1070 335,1130;360,1070 378,1130;400,1020 410,1150 565,1140;405,960 470,958 500,1070;425,1010 450,1000 470,1080;450,1008 500,995;580,1065 620,1130 695,1120;675,1060 735,1300;545,1060 590,1270 600,1350;580,1195 820,1165;585,1250 845,1220;590,1310 855,1278;725,1105 790,1095;765,1045 768,1090;765,1135 800,1130'],
  ['C', '0,1370 295,1340 380,1335 600,1310;45,1375 60,1440;160,1370 175,1440;265,1350 285,1440;380,1335 390,1440;475,1325 490,1440;540,1340 550,1440;315,1205 320,1330 370,1335;315,1245 365,1245;320,1275 380,1275;320,1305 380,1300;370,1155 372,1180;385,1153 386,1180;400,1155 402,1180;415,1153 416,1180;430,1153 432,1180;365,1155 455,1153;475,1190 500,1270;485,1225 500,1215;480,1250 500,1240;715,1360 800,1345 810,1400 718,1412 715,1360;725,1300 735,1355;785,1290 790,1320 810,1315 810,1290;465,75 540,40;500,70 530,160;540,40 565,100 655,105 673,150 600,185 565,100;575,10 600,45 640,28;520,230 670,195 785,215;525,250 600,240 780,270;670,195 660,250;525,285 575,265 670,275 690,330 660,345;545,325 600,310 605,280;560,350 640,330;720,300 765,330 735,375 740,420 790,445 830,430 800,350 790,270;795,320 865,500;640,380 620,365;740,420 725,500 745,565;620,480 705,450 720,500 650,520;670,490 730,475;640,740 795,690 808,735 715,790;640,740 655,790;840,600 870,700 905,800 950,860;870,530 930,700 995,860;895,540 965,720 1035,900;920,510 1050,760;915,665 975,645;890,765 1030,700;640,760 740,1050;780,945 860,890 915,830 1070,755;870,560 880,575 860,580'],
  ['C', '865,1215 985,1155;855,1225 900,1200 1200,1130;980,940 1100,895 1130,930;980,940 1050,1190 1110,1440;1030,920 1130,1180 1200,1360;1070,960 1170,1200 1240,1400;900,880 970,1100 1050,1340;975,1100 1180,1010;1000,1170 1200,1110;1005,1215 1240,1150;915,1250 1000,1220;895,1200 925,1290;960,1230 970,1265;1060,1330 1240,1260;1050,1350 1220,1300;1110,1000 1115,1050 1150,1030;1090,945 1130,935;1120,1070 1190,1050;1145,510 1220,530 1310,760;1110,140 1160,300 1220,530;1125,590 1220,540;1125,590 1130,660;1165,685 1215,655 1380,895 1275,950 1165,685;1200,720 1250,710;1225,800 1320,755 1350,745;1220,1025 1400,940 1480,830;1085,190 1155,160;1155,160 1235,120 1270,165 1285,215 1350,190;1085,190 1085,230 1150,320 1160,300;1300,0 1400,290 1480,540;1340,35 1400,20 1420,80 1440,120;1340,35 1380,190;1185,460 1300,400;1195,480 1310,440;1340,380 1370,365 1395,380 1390,420 1345,430 1340,400;1240,500 1395,435;1420,350 1500,310;1405,380 1568,320;1440,440 1568,370;1400,290 1440,295 1470,270;1040,20 1085,80 1230,25 1225,0;1085,80 1145,160;1310,1035 1395,1010 1430,1050 1450,1100;1310,1035 1320,1080 1380,1090 1430,1130;1360,1180 1568,1060;1480,1030 1568,985;1435,960 1480,1030;1500,1195 1520,1150 1568,1140;1440,1240 1460,1220 1490,1230 1465,1258 1440,1240;1500,1195 1510,1220 1568,1260;1365,1190 1390,1210;1305,740 1350,750 1430,700;1350,750 1355,820 1380,895'],
  ['D', '80,0 80,170 130,430 235,715 300,900 360,1060 410,1230 450,1330;240,200 300,225 370,230 365,300 300,325 240,410 180,460 190,540 230,625 350,570;370,120 372,200;365,300 430,310 470,350 510,360 580,345;350,545 440,490 530,455 555,455 585,485 620,470;340,455 370,530;410,645 460,760;590,330 630,317 815,348 845,435 905,660 945,980;630,317 690,510;690,320 745,495;725,425 845,435 940,400;655,535 745,495 845,580 800,655;685,620 740,605 905,740 1090,660 1240,640;845,580 940,535;720,720 750,720 905,855 930,945;770,915 885,845;815,995 920,940;905,740 865,720 820,785;940,740 990,888;970,720 1020,775 1070,745 1055,685;1110,715 1185,683 1220,735 1145,770 1110,715;1040,820 1110,790 1120,835 1060,865 1040,820;760,275 755,330;870,285 940,460 945,550 1015,520 985,450 945,465;950,400 985,395 990,415 945,430;1045,515 1170,463 1250,470 1300,490 1370,500;1045,515 1090,660;995,595 1160,520 1250,530 1250,610 1225,645 1300,745;1030,615 1140,575 1245,580;1090,660 1170,625 1225,645;900,340 990,335 1000,370 1060,380;1100,360 1110,395 1180,375 1225,400 1235,470;1300,490 1280,590 1330,620;1310,500 1330,600 1400,630;1375,500 1440,520 1470,560 1500,650 1568,700;1470,560 1568,500;1405,560 1440,530;1405,560 1415,600 1470,570;860,350 940,400;870,370 920,345;875,390 925,370;1500,690 1450,800 1340,740;0,875 30,945 120,890;95,850 140,885;60,860 110,950 120,1000 40,1065;0,1000 130,1050 205,1083 320,950;220,1140 340,1050;220,1140 240,1200 270,1195 290,1150 380,1165'],
  ['D', '310,1210 380,1180 405,1230 330,1247 310,1210;0,1090 30,1200 60,1310 30,1400;130,1060 260,1300;0,1220 30,1210;70,1175 150,1150 220,1250 240,1300;70,1175 110,1320;0,1290 45,1335 120,1340;15,1390 45,1335;175,1040 205,1083;240,970 285,1020 180,1050;635,1190 690,1320 730,1410 780,1415;690,970 765,920;685,960 700,1000;0,375 20,370 48,440 0,470;0,290 50,260 60,235;20,300 90,290 130,400;70,415 120,385;85,450 130,430;60,495 80,495 150,470;95,225 190,230;120,350 210,335;150,350 155,400;180,350 185,395;30,240 80,230;0,55 50,50 60,0;1370,760 1440,780 1500,730;1380,710 1450,690;1350,730 1420,750;1380,860 1440,830 1480,840;1430,780 1440,870 1400,930;30,480 100,470;890,1160 940,1180 1000,1150;845,1280 900,1230;930,1440 905,1310 880,1300;1250,410 1240,300 1280,270;1020,240 1040,160 1028,100 1005,20;850,180 830,100 845,45;850,180 930,190 985,165 955,140;495,72 560,70 560,0;560,70 575,110 548,140;575,110 620,148;618,0 618,85;676,170 760,170 775,180'],
  ['E', '0,50 300,25 350,20;350,40 365,155 450,140;190,95 230,95 235,160 200,165;155,50 200,160;265,30 285,145 200,165;0,195 495,165;10,120 55,120 60,180;240,160 275,380 280,560;265,195 490,170;270,245 500,220;365,185 400,590 445,660;420,30 430,150;345,100 420,95;480,20 525,155 545,155;510,10 540,155;460,0 500,250 515,400 540,590;540,30 600,30 600,120 540,125;555,205 580,205 585,270;20,260 40,585;130,240 165,570;0,335 410,295 620,265 985,230;25,390 280,360;0,420 290,400;0,480 210,460;0,550 270,520 530,490;0,590 200,575 400,590 530,545;410,295 420,405;425,300 535,285 538,390 445,400;440,345 535,335;615,320 720,313;720,90 730,255;725,145 870,130 890,180 1005,505;725,200 885,180;690,95 720,92;620,120 635,235;730,225 950,190;845,245 848,300 780,310 785,360 880,350;905,240 920,300 1000,480;945,300 1005,505;515,465 860,430 1010,425;535,520 865,485 990,480;610,270 645,580;540,585 700,570 865,545;700,445 725,570;740,440 750,550;860,450 870,540;535,515 400,530;715,40 808,28 813,80 725,90;720,40 725,145;775,0 800,80'],
  ['E', '160,610 165,740;160,620 230,610 235,570;160,660 330,640 400,620;225,610 240,690;255,580 300,670;300,640 345,570;0,650 25,650 10,680;40,690 105,700 110,740;100,660 75,730;190,665 280,655;200,665 205,690;225,660 228,690;190,730 385,690 440,655;435,580 500,570 505,610 440,630;450,600 560,590 585,560;545,590 550,560 580,560;440,600 470,770;480,575 490,620;620,780 635,895;640,920 665,1075 700,1180 790,1240;490,995 640,985;700,970 720,1080;735,965 750,1080;775,965 790,1110 915,1090;815,955 830,1100;860,950 875,1090;905,945 915,1080;950,940 960,1080;990,940 995,1080;870,675 900,680 905,750 940,840 965,860 1080,810;1010,850 1100,830 1150,830;1170,700 1190,760;1050,0 1075,70 1120,170 1190,270 1260,275 1330,270;1140,0 1290,270;1195,0 1350,270;1075,70 1140,50 1200,0;1080,150 1140,120 1175,125;1140,120 1120,90;1100,200 1210,110;1130,180 1210,230;1150,100 1190,190;1215,125 1290,100;1230,150 1300,130;1250,190 1310,170;1270,220 1330,200;1280,235 1350,220;1205,400 1275,380 1285,420 1220,445 1205,400;1200,290 1260,400 1330,380 1270,280;1205,540 1205,700;1230,990 1230,1050 1310,1015;1300,955 1450,965 1568,930;1300,955 1390,1230;1380,960 1520,1273;1300,955 1370,880 1400,890 1455,965;1395,1130 1510,1095;1440,1150 1568,1110;1370,440 1410,540 1430,600;1370,440 1480,410 1500,460;1400,470 1450,540;1485,370 1500,460 1568,430;1500,550 1540,650;1280,590 1310,680;1190,880 1150,890 1150,920;610,1240 790,1225 860,1230'],
  ['F', '10,70 60,130 105,180;50,0 100,80 150,50;0,20 30,50;75,0 130,60;120,250 165,235 205,250 220,310 160,300 120,310 120,280;205,270 265,265 290,310;250,260 255,320;325,115 370,290;215,150 260,230;250,130 285,220;285,110 340,230;230,160 330,120;375,210 430,170 465,205 390,245 375,210;375,100 510,230 560,225 630,140;440,60 470,150;345,120 500,60;515,145 605,105 600,160 540,195 515,145;735,265 770,250 740,270 880,510;780,240 910,640 1005,1060;690,305 705,355 735,480;820,230 880,510;705,355 680,355 600,445 570,500 610,595 695,590 715,605 700,640 710,700 765,800;600,445 650,495 740,490 770,560 825,540 1000,460 1095,375 1200,375 1225,350;665,440 705,400 720,470 670,465 665,440;650,500 695,510 685,590;730,540 755,530;715,605 770,560;770,560 840,560;755,635 835,750 785,780;755,635 790,615;635,705 700,670;610,595 635,705;765,800 810,840 965,765 990,750 1000,640 935,560 935,500 1000,470;810,840 880,970 895,1050;670,850 765,800;690,900 780,870 800,920 720,920 690,900;860,815 905,900 960,1060;930,655 965,765 1030,860;905,410 960,385 970,425 915,445 905,410;950,440 960,470;785,850 820,940;1095,375 1065,410 1115,460 1170,480 1200,375;1165,390 1160,430 1085,420;1115,460 1085,520 1090,550 1125,600 1155,620 1165,580 1140,540 1085,520;1170,460 1190,510 1220,570 1270,600 1290,660 1210,675 1160,620;1220,570 1280,545 1285,575 1230,600;1215,500 1260,450;1210,490 1240,440;1285,660 1340,645;1240,680 1245,740 1225,740;1290,660 1310,735 1340,735;940,500 1010,480 1025,520 950,530;905,555 960,600 1010,570 1060,620;1200,800 1195,850 1215,900 1270,880 1325,900;1195,850 1260,820 1330,840 1365,815 1390,815;1225,790 1230,830;1265,785 1265,820;1335,795 1315,840;1155,870 1195,850;1300,990 1310,930 1350,910;1065,870 1130,810 1155,880 1210,1060;1065,870 1110,920 1115,960 1190,1040;1035,985 1110,960 1140,1000 1105,1060 1050,1030 1035,985;1120,950 1150,920;880,970 930,960;890,1000 935,990'],
  ['F', '160,800 200,920 120,970 190,1160 240,1170 470,1070 540,1273;415,880 415,930 470,1070;0,1080 130,1025;0,920 50,1050;950,255 990,255 1040,310 1095,375;75,1080 110,1190;300,1150 330,1200;1140,1150 1180,1273'],
];

/* Slim roads around the interchanges. */
const RAMPS: [TileId, string][] = [
  ['D', '900,1200 980,1195 1060,1220 1100,1215;950,1330 960,1260 990,1225 1020,1240 1025,1280;1150,1210 1130,1370 1070,1430;1060,1300 1100,1310 1120,1350 1110,1400 1050,1400;930,1370 930,1290'],
  ['E', '200,910 245,910 275,950 270,990 200,1050;190,900 130,1080;215,900 350,950 400,945;230,1090 350,1010 480,990 620,980 1060,940;250,1110 330,1020;1060,900 1150,935 1210,940;1300,880 1240,890 1220,930;70,1110 180,1200'],
  ['F', '10,310 50,420 150,560 200,640;60,430 140,525 250,600 340,620;200,640 140,585 95,590 85,625 100,660 160,670;485,520 470,610 520,690;400,720 330,700;100,680 200,660;660,1210 660,1273;990,40 1060,90 1120,40 1100,0'],
];

const SECONDARY: [TileId, string][] = [
  ['A', '0,527 235,475 340,478 420,515 480,555 640,750 725,790 805,790 870,768 1060,600 1160,530 1250,518 1400,520 1480,512 1535,485 1568,460'],
  ['B', '0,460 185,308 255,277 325,265 450,265 685,220 760,200 830,192 1005,192 1150,140 1255,112 1345,105 1568,108'],
  ['A', '725,790 660,950 648,1060 650,1160 680,1260 720,1350 760,1415 780,1430'],
  ['C', '675,-10 720,85 760,150 890,260 960,340 1010,460 1050,560 1100,680 1150,850 1190,1010 1225,1130 1285,1235 1350,1320 1480,1440'],
  ['C', '1105,680 1140,780 1205,1030 1260,1140 1370,1290 1510,1440'],
  ['E', '1345,0 1495,125 1560,300'],
  ['E', '1390,0 1505,105 1575,300'],
  ['D', '545,235 600,380 690,650 760,880 800,1040 830,1120 890,1220 960,1310 1060,1440'],
  ['F', '990,40 1090,150 1230,350 1270,420 1340,640 1440,920'],
];

const MAJOR: [TileId, string][] = [
  ['A', '0,1278 280,1245 420,1233 500,1440'],
  ['C', '430,0 470,110 520,270 650,640 700,770 770,950 860,1220 930,1440'],
  ['E', '885,0 960,190 1050,470 1090,580 1130,680 1205,880 1230,980 1335,1273'],
  ['C', '105,925 250,850 480,725 545,690 650,635 870,520 1050,420 1280,290 1440,215'],
  ['D', '20,168 370,205 540,228 600,235 900,280 1150,325 1320,285 1480,180 1525,190 1530,250 1520,300 1400,430 1370,500 1368,600 1355,690 1310,750 1100,890 840,1050 480,1290 270,1440'],
  ['F', '475,0 0,290 70,430'],
  ['E', '1575,300 1500,350 1370,415 1180,530 1100,575 860,590 850,610 860,740 700,760 440,793 350,790 260,750 200,748 130,785'],
  ['E', '1065,470 1190,540 1280,585 1420,620 1580,685'],
  ['F', '0,690 170,760 350,840 480,885 590,960'],
  ['F', '650,990 720,1000 900,1050 1060,1100 1150,1110'],
  ['E', '0,690 130,790 190,900 200,1060 205,1160 170,1280'],
  ['F', '1568,840 1440,935 1220,1080 1020,1210 860,1265 780,1255'],
];

const HIGHWAY: [TileId, string, number][] = [
  ['D', '1600,790 1470,930 940,1380', 17],
  ['F', '1020,0 860,140 600,340 240,640 80,730 -20,780', 17],
  ['E', '1560,805 1480,830 1400,840 1180,860 500,930 390,960 230,1045 150,1070 -10,1092', 17],
  ['F', '580,360 540,440 460,560 370,635 250,650', 13],
  ['F', '100,710 220,688 350,688 470,740 550,830 590,920 620,1080 680,1220 740,1285', 13],
  ['F', '200,650 350,637 470,680 560,760 610,870 630,1000 650,1120 700,1230 760,1300', 13],
];

const STREAMS: [TileId, string, number][] = [
  ['A', '185,350 187,400 210,470 390,615 600,890 670,955 700,980 765,1140 810,1142 862,1090', 4],
  ['A', '600,890 555,1060 562,1140 530,1195 482,1230', 4],
  ['A', '1548,205 1537,335 1498,350 1498,390 1465,408 1465,440', 3],
  ['A', '1385,265 1425,265 1452,277 1510,255 1540,255', 2.5],
  ['A', '1440,1200 1500,1225 1568,1235', 4],
  ['B', '0,1238 68,1244;150,1045 168,1092', 4],
  ['A', '1050,640 1060,680 1090,690 1093,715', 4],
  ['A', '1045,650 1060,615 1080,630 1075,655 1110,655 1105,615 1150,605 1155,640 1120,655', 6],
  ['D', '518,855 518,872 455,920 400,925 358,970 395,1065 385,1100 455,1305', 4.5],
  ['D', '1465,962 1568,967;1568,1020 1540,1060 1535,1105 1498,1130;1515,615 1568,585', 4],
  ['D', '1125,1405 1150,1425 1225,1415 1270,1435', 4],
  ['F', '1125,85 1150,102 1225,92 1300,130 1325,150 1450,153 1568,190', 4.5],
  ['F', '-20,340 35,545 130,415 250,382 360,390 420,415 530,530 600,740 650,900 660,1000 715,1080;235,340 250,382;465,340 472,385 425,415;355,550 405,670 480,720 550,790 610,900', 4],
  ['F', '1370,765 1470,772 1568,772;1540,612 1568,628;1568,415 1535,398 1505,425;1490,440 1465,455', 4],
  ['F', '250,1222 275,1245 345,1235 420,1190 495,1158;620,1155 635,1185;700,1170 765,1185 830,1230 890,1230 905,1245;1350,1270 1430,1273 1430,1210 1410,1145;1568,880 1520,920 1565,950 1500,1040', 4],
  ['E', '1510,355 1550,400 1568,450', 3],
];

const RUNWAYS: [string, number, string][] = [
  ['485,397 950,243 1000,243 1107,342', 5, '#CAD8DF'],
  ['970,240 930,330 895,410;710,352 1030,280;1040,290 960,430 880,610;605,375 612,440', 5, '#CAD8DF'],
  ['523,478 1107,345', 7, '#BFCFD9'],
];

const Lines = ({ items, w, color }: { items: [TileId, string][]; w: number; color: string }) => (
  <>
    {items.map(([t, s], i) => (
      <path key={i} transform={SHEETS[t]} d={toPath(s)} fill="none" stroke={color} strokeWidth={w} strokeLinejoin="round" vectorEffect="non-scaling-stroke" />
    ))}
  </>
);

const WeightedLines = ({ items, extra = 0, color }: { items: [TileId, string, number][]; extra?: number; color: string }) => (
  <>
    {items.map(([t, s, w], i) => (
      <path key={i} transform={SHEETS[t]} d={toPath(s)} fill="none" stroke={color} strokeWidth={w + extra} strokeLinejoin="round" vectorEffect="non-scaling-stroke" />
    ))}
  </>
);

/* ---------- Pins and labels ---------- */

const Pin = ({ x, y, fill, children }: { x: number; y: number; fill: string; children?: React.ReactNode }) => (
  <g transform={`translate(${x} ${y})`}>
    <circle r="26.5" fill="#F3F3EC" fillOpacity="0.85" filter="url(#soft)" />
    <circle r="22" fill={fill} />
    <g fill="#fff">{children}</g>
  </g>
);

const Bag = () => (
  <>
    <path d="M-5.500-8v-2.500a5.500 5.500 0 0 1 11 0V-8" fill="none" stroke="#fff" strokeWidth="2.600" />
    <path d="M-11.500-8.500h23a1.500 1.500 0 0 1 1.500 1.500V3.500h-26V-7a1.500 1.500 0 0 1 1.500-1.500zM-13 5.500h26V8a1 1 0 0 1-1 1h-24a1 1 0 0 1-1-1z" />
  </>
);

const Tram = ({ x, y, wire }: { x: number; y: number; wire?: boolean }) => (
  <g transform={`translate(${x} ${y})`}>
    <rect x="-29" y="-29" width="58" height="58" rx="15" fill="#F3F3EC" fillOpacity="0.85" filter="url(#soft)" />
    <rect x="-24" y="-24" width="48" height="48" rx="10" fill="url(#blue)" />
    {wire && <path d="M-8-16.500h16M-3.500-16l3.500 3 3.500-3" fill="none" stroke="#fff" strokeWidth="1.800" />}
    <path fill="#fff" fillRule="evenodd" d={wire ? 'M-6-13h12q4 1 4.500 9v8q0 6-5 6h-11q-5 0-5-6v-8q.5-8 4.500-9zM-5-10q-3 1-3 9 8 2.500 16 0 0-8-3-9zM-7.500 3v3h4V3zM3.500 3v3h4V3z' : 'M-8-15.500h16q3.500 0 3.500 4v17q0 4.500-5 4.500h-13q-5 0-5-4.500v-17q0-4 3.500-4zM-8-10v8.500h16V-10zM-4-13.500v1h8v-1zM-8 2v2.500h4.500V2zM3.500 2v2.500h4.500V2z'} />
    <path d="M-5 10l-6 7.500M5 10l6 7.500M-8.500 13.500h17" stroke="#fff" strokeWidth="2.600" strokeLinecap="round" fill="none" />
  </g>
);

const Museum = () => (
  <path d="M0-15.500l12.500 8v3h-25v-3zM-10.500-3h3.500V6.500h-3.500zM-5.200-3h3.500V6.500h-3.500zM1.700-3h3.500V6.500h-3.500zM7-3h3.500V6.500H7zM-13 8h26v3.500h-26z" />
);

type LabelProps = { x: number; y: number; w?: number; size?: number; color: string; anchor?: 'start' | 'middle' | 'end'; children: string; weight?: number; font?: string; squeeze?: boolean; track?: number };
const Label = ({ x, y, w, size = 28, color, anchor = 'start', children, weight = 600, font = 'Inter, sans-serif', squeeze, track }: LabelProps) => (
  <text
    x={x}
    y={y}
    fontSize={size}
    fontWeight={weight}
    fontFamily={font}
    textAnchor={anchor}
    textLength={w}
    letterSpacing={track}
    lengthAdjust={squeeze ? 'spacingAndGlyphs' : 'spacing'}
    fill={color}
    stroke="#F6F5EE"
    strokeOpacity="0.9"
    strokeWidth="6"
    strokeLinejoin="round"
    style={{ paintOrder: 'stroke' }}
  >
    {children}
  </text>
);

const Shield = ({ x, y }: { x: number; y: number }) => (
  <g transform={`translate(${x} ${y})`}>
    <path d="M5 0h54q6 0 5 6l-7 45q-1 6-7 6H14q-6 0-7-6L0 6Q0 0 5 0z" fill="#fff" stroke="#3F4143" strokeWidth="2.500" />
    <path d="M9 5h46q4 0 3 4l-6 39q-1 4-4 4H16q-3 0-4-4L6 9q-1-4 3-4z" fill="#fff" stroke="#3F4143" strokeWidth="2.200" />
    <text x="32" y="38" textAnchor="middle" fontFamily="Inter, sans-serif" fontWeight="700" fontSize="29" textLength="33" lengthAdjust="spacingAndGlyphs" fill="#3A3B3D">34</text>
  </g>
);

const BROWN = '#8F6A0E';
const PINKTXT = '#B83580';
const GREENTXT = '#1F803F';
const GREY = '#5A5E60';

const MapView = () => (
  <svg className="block h-[1296px] w-full" viewBox="0 1224 1206 1296" aria-label="Carte">
    <defs>
      <linearGradient id="pink" x1="0" x2="0" y1="0" y2="1"><stop offset="0" stopColor="#F989DD" /><stop offset="1" stopColor="#C4267F" /></linearGradient>
      <linearGradient id="grn" x1="0" x2="0" y1="0" y2="1"><stop offset="0" stopColor="#63DC6E" /><stop offset="1" stopColor="#099C39" /></linearGradient>
      <linearGradient id="gold" x1="0" x2="0" y1="0" y2="1"><stop offset="0" stopColor="#FFDF1A" /><stop offset="1" stopColor="#EE8500" /></linearGradient>
      <linearGradient id="blue" x1="0" x2="0" y1="0" y2="1"><stop offset="0" stopColor="#57A5FF" /><stop offset="1" stopColor="#145ADF" /></linearGradient>
      <filter id="soft" x="-40%" y="-40%" width="180%" height="190%"><feDropShadow dx="0" dy="4" stdDeviation="4" floodColor="#4b5340" floodOpacity="0.35" /></filter>
      <filter id="txt" x="-5%" y="-5%" width="110%" height="110%"><feDropShadow dx="0" dy="7" stdDeviation="6" floodColor="#4b5340" floodOpacity="0.24" /></filter>
      <path id="rd1" d="M343 1816Q380 1797 440 1769T545 1722" />
      <path id="rd2" d="M946 1738Q1004 1751 1052 1755Q1100 1753 1124 1737L1165 1708" />
    </defs>
    <rect x="0" y="1224" width="1206" height="1296" fill={C.land} />
    {AREAS.map(([t, color, s], i) => (
      <path key={i} transform={SHEETS[t]} d={toPath(s, true)} fill={color} />
    ))}
    <path transform={SHEETS.A} d={toPath(SEA, true)} fill={C.water} />
    <path transform={SHEETS.B} d={toPath(SEA_EAST, true)} fill={C.water} />
    <path transform={SHEETS.B} d="M1568 160l-12 10 6 30 6 5z" fill={C.water} />
    <path transform={SHEETS.A} d={toPath('795,162 860,165;830,140 828,160;853,140 853,175;853,140 917,130;853,160 900,153')} fill="none" stroke="#D9E6E8" strokeWidth="1.200" vectorEffect="non-scaling-stroke" />
    <path transform={SHEETS.A} d={toPath('848,183 845,262 710,292 697,268 800,238 800,218 830,210 830,185', true)} fill={C.land} />
    <path transform={SHEETS.A} d={toPath('-20,276 500,160 1000,38 1130,-4')} fill="none" stroke="#9DB4DE" strokeWidth="20" vectorEffect="non-scaling-stroke" />
    <path transform={SHEETS.A} d={toPath('0,272 500,155 1000,40 1068,15 1160,-20')} fill="none" stroke="#9B8EC6" strokeWidth="4.500" strokeDasharray="31 9 14 9.500 6 8.500" vectorEffect="non-scaling-stroke" />
    {RUNWAYS.map(([s, w, color], i) => (
      <path key={i} transform={SHEETS.A} d={toPath(s)} fill="none" stroke={color} strokeWidth={w} vectorEffect="non-scaling-stroke" />
    ))}
    <Lines items={STREETS} w={1.7} color={C.street} />
    <WeightedLines items={STREAMS} color={C.water} />
    <g fill="none" stroke="#F3DDB0" strokeWidth="1.600">
      <rect x="1031" y="1507" width="34" height="20" rx="9" transform="rotate(15 1048 1517)" />
      <rect x="1097" y="1946" width="38" height="20" rx="10" transform="rotate(-33 1116 1956)" />
      <rect x="1171" y="1763" width="16" height="38" rx="8" stroke="#DDE3D5" />
    </g>
    <Lines items={RAMPS} w={5.5} color="#BCBEC0" />
    <Lines items={RAMPS} w={3.5} color="#D6D7DA" />
    <Lines items={SECONDARY} w={9} color="#BABCBD" />
    <Lines items={SECONDARY} w={6} color="#E3E4E7" />
    <Lines items={MAJOR} w={11.5} color="#B3B4B7" />
    <Lines items={MAJOR} w={9} color="#D2D3D8" />
    <WeightedLines items={HIGHWAY} extra={2} color="#939398" />
    <WeightedLines items={HIGHWAY} color="#B1B2B8" />

    {/* Road names */}
    <g fontFamily="Inter, sans-serif" fontSize="25" fontWeight="500" fill="#3A3B3D" stroke="#F6F5EE" strokeWidth="6" strokeLinejoin="round" style={{ paintOrder: 'stroke' }}>
      <text textLength="207"><textPath href="#rd1" textLength="207">MONTREAL RD</textPath></text>
      <text textLength="214"><textPath href="#rd2" textLength="214">MONTREAL RD</textPath></text>
    </g>
    <Shield x={553} y={1674} />
    <Shield x={1168} y={1652} />

    {/* Districts */}
    <Label x={1042} y={1466} w={108} size={31} weight={500} track={3.5} color={GREY} font="Roboto, sans-serif" squeeze>BEACON</Label>
    <Label x={1017} y={1498} w={157} size={31} weight={500} track={3.5} color={GREY} font="Roboto, sans-serif" squeeze>HILL NORTH</Label>
    <Label x={12} y={2255.500} w={189} size={36} weight={500} track={3.5} color={GREY} font="Roboto, sans-serif" squeeze>OVERBROOK</Label>
    <Label x={80} y={1976.500} w={123} size={38} color={GREY} anchor="end">Vanier</Label>
    <Label x={767} y={2020} w={298} size={56} track={2} color={GREY} squeeze>Gloucester</Label>

    {/* Places */}
    <g filter="url(#txt)">
      <Label x={335} y={1385} w={234} color={PINKTXT}>Canada Aviation</Label>
      <Label x={335} y={1415} w={284} color={PINKTXT}>and Space Museum</Label>
      <Label x={1062} y={1605} w={176} color={GREENTXT}>Ski Hill Park</Label>
      <Label x={622} y={1912} w={99} color="#7F5646">La Cité</Label>
      <Label x={687} y={2107} w={125} color={PINKTXT}>Cineplex</Label>
      <Label x={445} y={2196.500} w={148} color={BROWN}>Decathlon</Label>
      <Label x={419} y={2330.500} w={159} color={BROWN}>St. Laurent</Label>
      <Label x={419} y={2362} w={244} color={BROWN}>Shopping Centre</Label>
      <Label x={143} y={2390} w={196} anchor="end" color={BROWN}>Canadian Tire</Label>
      <Label x={1121} y={2175} w={140} color={GREENTXT}>Pine View</Label>
      <Label x={1121} y={2205.500} w={165} color={GREENTXT}>Golf Course</Label>
      <Label x={937} y={2470.500} w={244} color={BROWN}>The Home Depot</Label>
      <Label x={309} y={2521} w={104} color={BROWN}>Ottawa</Label>
    </g>

    <Pin x={305} y={1389} fill="url(#pink)"><Museum /></Pin>
    <Pin x={1032} y={1594} fill="url(#grn)">
      <path d="M0-12c4 0 5 2 5.500 4 4 0 6 3 5.500 6 1 5-4 7-8 4l-1.500 1v8l3 1.500v1h-9v-1l3-1.500V5l-3-3c-5 1-8-2-7-5-1-4 2-6 6-6 .5-2 2-3 5.500-3z" />
    </Pin>
    <Pin x={845} y={2096} fill="url(#pink)">
      <circle cx="-8" cy="-9.500" r="3.800" fill="none" stroke="#fff" strokeWidth="3" />
      <circle cx="2.500" cy="-9.500" r="3.800" fill="none" stroke="#fff" strokeWidth="3" />
      <path d="M-9-2.500H5q1.500 0 1.500 1.500v2L13-2.500V8L6.500 4.500v1Q6.500 7 5 7H-9q-1.500 0-1.500-1.500V-1Q-10.500-2.500-9-2.500z" />
      <path d="M-5 7l-4 6M2 7l4 6" stroke="#fff" strokeWidth="1.800" />
    </Pin>
    <Tram x={935} y={2102} wire />
    <Pin x={415} y={2186} fill="url(#gold)">
      <circle cx="-6.500" cy="-6" r="7.300" fill="none" stroke="#fff" strokeWidth="1.800" />
      <path d="M-6.500-9l3 2.200-1.100 3.400h-3.800l-1.100-3.400z" />
      <path d="M-6.500-13v4M-13-7.500l3.500.7M-10.500 0l2.100-3.400M-2.500 0l-2.100-3.400M0-7.500l-3.500.7" stroke="#fff" strokeWidth="1.600" />
      <ellipse cx="9.500" cy="1" rx="5.500" ry="8" transform="rotate(38 9.500 1)" fill="none" stroke="#fff" strokeWidth="2.400" />
      <path d="M4 7.500L-2.500 14" stroke="#fff" strokeWidth="3.600" strokeLinecap="round" />
    </Pin>
    <Pin x={389} y={2336} fill="url(#gold)">
      <path d="M-7-9v-1a4.800 4.800 0 0 1 9.600 0v1" fill="none" stroke="#fff" strokeWidth="2.400" />
      <path d="M-12-9H7q1.500 0 1.500 1.500V-5H-1q-2 0-2 2V2.500h-10.500V-7.500Q-13.500-9-12-9zM-13.500 4.500H-3V9.500h-9.500q-1 0-1-1zM0-3.500h14q1.500 0 1.500 1.500V8q0 1.500-1.500 1.500H0Q-1.500 9.500-1.500 8V-2Q-1.500-3.500 0-3.500z" />
      <path d="M2.500-.5q0 5 4.500 5t4.500-5" fill="none" stroke="#F4A900" strokeWidth="1.800" />
    </Pin>
    <Pin x={174} y={2379} fill="url(#gold)"><Bag /></Pin>
    <Pin x={906} y={2460} fill="url(#gold)"><Bag /></Pin>
    <Pin x={280} y={2526} fill="url(#gold)"><Bag /></Pin>
    <Pin x={1092} y={2179} fill="url(#grn)">
      <path d="M-4-16l3 .5q4 3 8 1.500 2 2 4 1.500l-3 7q-5-1-10 0V5h-2z" />
      <path fillRule="evenodd" d="M0 3c7 0 13 2 13 4.500S7 12 0 12-13 10-13 7.500-7 3 0 3zM-4 5.500c-2 0-3.500.8-3.500 1.700S-6 9-3 9s4-.8 4-1.800S-1 5.500-4 5.500z" />
    </Pin>
    <Tram x={171} y={2490} />

    {/* Library marker with a cut-out temple */}
    <Pin x={596} y={1901} fill="#9A6547" />
    <ellipse cx="603" cy="1872" rx="53" ry="51" fill="#000" />
    <g transform="translate(603 1870)">
      <path d="M-1-27q2-1 4 0l22 13.500q2 3-1 3.500h-48q-4-1-1-4z" fill="#D5E3B4" />
      <path d="M-12-20L-1-27q2-1 4 0l3 2q-2 6-12 12h-18q-4 0-2-1z" fill="#C5E5A7" />
      <g fill="#EFE6D2">
        {[-19, -6, 6.5, 19].map((cx) => (
          <path key={cx} transform={`translate(${cx} 0)`} d="M-5.500-7.500h11v2.500q-2.500.5-2.500 2V15.500q2.500 1 2.500 4.500h-11q0-3.500 2.500-4.500V-3q0-1.500-2.500-2z" />
        ))}
      </g>
      <path d="M-24 20q0-3.500 2.500-4.500V9.500h5v6q2.500 1 2.500 4.500zM-11.500 20q0-3.500 2.500-4.500V9h6v6.500Q-1 16.500-.5 20zM1 20q0-3.500 2.500-4.500V10l5 8v2z" fill="#A16D4F" />
      <path d="M-26 22h52q3 1 3 5h-58q0-4 3-5z" fill="#F3F0E8" />
      <path d="M-26 22h12q-6 1-10 5h-5q0-4 3-5zM-1 22h7l3 5H0z" fill="#A16D4F" />
    </g>

    {/* Attribution */}
    <g opacity="0.88">
      <path transform="translate(32 2451) scale(1.480 1.520)" d="M13.500 4.600c.9-1.100 1.500-2.600 1.300-4.100-1.300.1-2.800.9-3.700 1.900-.8 1-1.500 2.500-1.300 3.900 1.400.1 2.800-.7 3.700-1.700zM14.800 6.800c-2-.1-3.800 1.200-4.700 1.200-1 0-2.500-1.100-4.100-1.100C3.900 6.900 2 8.100 0.900 9.900c-2.200 3.800-.6 9.500 1.600 12.600 1 1.500 2.300 3.200 3.900 3.200 1.600-.1 2.200-1 4.100-1s2.500 1 4.100 1c1.700 0 2.800-1.500 3.800-3.100 1.200-1.700 1.700-3.400 1.700-3.500-.1 0-3.300-1.300-3.300-5 0-3.100 2.600-4.600 2.700-4.700-1.500-2.200-3.800-2.500-4.700-2.600z" fill="#424A3E" />
      <text x="65" y="2488" fontFamily="Inter, sans-serif" fontSize="46.500" fontWeight="500" textLength="116" lengthAdjust="spacingAndGlyphs" fill="#424A3E">Maps</text>
      <text x="209" y="2483" fontFamily="Inter, sans-serif" fontSize="27" fontWeight="500" textLength="75" fill="#6E7267">Legal</text>
      <path d="M210 2487.500h31M259 2487.500h25" stroke="#6E7267" strokeWidth="3" />
    </g>
  </svg>
);

/* ---------- Header ---------- */

const BooksLogo = () => (
  <svg className="h-[210px] w-[220px]" viewBox="0 0 660 630">
    <g stroke="#000" strokeWidth="7" strokeLinejoin="round">
      <path d="M306 192l4-62M306 192l-40-32M306 192l44-32" strokeWidth="5" />
      <ellipse cx="311" cy="102" rx="14" ry="27" fill="#7ED957" />
      <path d="M224 126q34-2 44 36-34-2-44-36zM396 127q-36 0-47 34 36 2 47-34z" fill="#7ED957" />
      <path d="M248 197h119v60q-10 32-60 34-50-4-59-34z" fill="#CDD1E4" />
      <path d="M285 295h38" />
      <path d="M139 299h215q26 4 26 25t-26 25H139z" fill="#FFDE59" />
      <path d="M104 359h184q24 4 24 25t-24 24H104z" fill="#D9DBAE" />
      <rect x="104" y="419" width="323" height="69" rx="8" fill="#CDD1E4" />
      <path d="M341 419h29v69h-29z" fill="#8981AF" />
      <rect x="104" y="498" width="323" height="70" rx="8" fill="#8981AF" />
      <path d="M341 498h29v70h-29z" fill="#CDD1E4" />
      <path d="M386 292l48-19q8-2 11 5l106 254q2 8-5 12l-50 20q-7 2-10-5L382 303q-2-8 4-11z" fill="#EA6294" />
      <path d="M463 494l57-23 11 20-61 25z" fill="#7ED957" />
    </g>
  </svg>
);

const StatusBar = () => (
  <div className="flex h-[190px] items-start pt-[41px]">
    <div className="flex h-[113px] w-[415px] items-center pl-[158px]">
      <span className="text-[50px] leading-none font-semibold tracking-[0.800px]">10:01</span>
    </div>
    <div className="h-[111px] w-[376px] rounded-full bg-black" />
    <svg className="mt-[37px] ml-[74px] h-[41px] w-[240px]" viewBox="0 0 240 41">
      <g fill="#737277">
        <rect x="0" y="28" width="10" height="10" rx="3.500" />
        <rect x="16" y="28" width="10" height="10" rx="3.500" />
        <rect x="32" y="28" width="10" height="10" rx="3.500" />
        <rect x="48" y="28" width="10" height="10" rx="3.500" />
      </g>
      <path d="M105.500 38l-7.300-7.500q7.300-5 14.600 0z" stroke="#000" strokeLinejoin="round" strokeWidth=".6" />
      <path d="M91.500 23.500q14-11.500 28 0M83 14.500q22.500-18.500 45 0" fill="none" stroke="#000" strokeWidth="7.200" />
      <rect x="154.500" y="1.500" width="72.500" height="36" rx="12" fill="none" stroke="#5B5A5D" strokeWidth="3" />
      <rect x="159" y="6" width="63" height="27" rx="8" />
      <path d="M231 13.500q4.500 2 4.500 6t-4.500 6z" fill="#5B5A5D" />
    </svg>
  </div>
);

const LogoutIcon = () => (
  <svg className="mt-[2px] h-[72px] w-[70px]" viewBox="0 0 70 72" fill="none" stroke="#000" strokeWidth="5">
    <path d="M46.500 27.500V10.500Q46.500 3 39 3H10Q2.500 3 2.500 10.500V61.500Q2.500 69 10 69H39Q46.500 69 46.500 61.500V45" />
    <path d="M27 36H65M56 25L65.500 36 56 47" strokeLinecap="round" strokeLinejoin="round" />
  </svg>
);

export default function App() {
  return (
    <div className="flex h-[2622px] w-[1206px] flex-col overflow-hidden bg-white font-['Inter',sans-serif] text-black">
      <header className="h-[486px] bg-[#8E8D92]">
        <StatusBar />
        <div className="flex items-center pr-[98px] pl-[40px]">
          <div className="mt-[80px] h-[210px] -translate-y-[40px]"><BooksLogo /></div>
          <h1 className="mt-[4px] ml-[64px] flex-1 text-[82px] leading-[102px] font-bold">
            <span className="block tracking-[-1.100px]">NOTRE</span>
            <span className="block tracking-[0.500px]">BIBLIO</span>
          </h1>
          <LogoutIcon />
        </div>
      </header>

      <nav className="flex h-[168px] flex-col items-center justify-center gap-[19px] bg-[#A9A9A9] pr-[2px]">
        <span className="h-[11px] w-[71px] rounded-[3px] bg-white" />
        <span className="h-[11px] w-[71px] rounded-[3px] bg-white" />
        <span className="h-[11px] w-[71px] rounded-[3px] bg-white" />
      </nav>

      <div className="flex h-[157px] items-center justify-center bg-[#34C85A] text-[50px] leading-none tracking-[-1.100px]">MES EMPRUNTS</div>

      <section className="flex h-[413px] flex-col gap-[30px] px-12 pt-12">
        <input
          className="h-[102px] w-full rounded-[15px] border border-[#CDCDCF] px-[20px] pt-[2px] text-[50px] tracking-[-1.150px] placeholder:text-[#C5C5C7] placeholder:opacity-100"
          placeholder="Adresse de départ"
        />
        <button className="flex h-[155px] w-full items-center justify-center gap-[29px] rounded-[32px] bg-[#E8E8EA] pl-[5px] text-[50px] leading-none tracking-[-0.900px] text-[#BFBFC2]">
          <svg className="h-[58px] w-[58px]" viewBox="0 0 58 58">
            <path d="M24.500 2.500q4.500-4 9 0l22 22q4 4.500 0 9l-22 22q-4.500 4-9 0l-22-22q-4-4.500 0-9z" fill="#BFBFC2" />
            <path d="M19.500 37V29q0-6 6-6h8" fill="none" stroke="#E8E8EA" strokeWidth="4.500" strokeLinecap="round" />
            <path d="M33 16.500q0-1.500 1.500-.5l8 6.500q1 1 0 2l-8 6.500q-1.500 1-1.500-.5z" fill="#E8E8EA" />
          </svg>
          Itinéraire
        </button>
      </section>

      <MapView />

      <footer className="flex h-[102px] items-start justify-center bg-white pt-[63px]">
        <div className="h-[15px] w-[432px] rounded-full bg-black" />
      </footer>
    </div>
  );
}
